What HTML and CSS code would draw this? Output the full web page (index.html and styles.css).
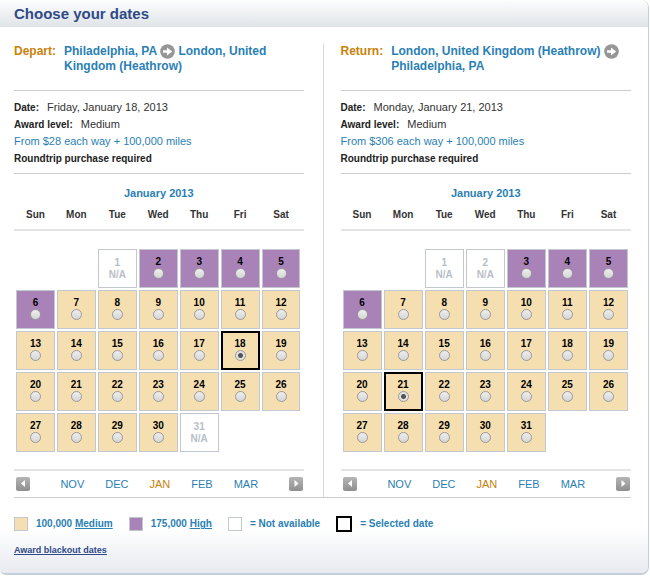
FILE: index.html
```html
<!DOCTYPE html>
<html lang="en">
<head>
<meta charset="utf-8">
<title>Choose your dates</title>
<link rel="stylesheet" href="styles.css">
</head>
<body>
<svg class="defs" aria-hidden="true">
  <symbol id="arrow" viewBox="0 0 15 15">
    <circle cx="7.5" cy="7.5" r="7.3" fill="#969696"/>
    <path d="M3 6.3h4V3.4l5.2 4.1L7 11.6V8.7H3z" fill="#fff"/>
  </symbol>
</svg>
<main class="panel">
  <h1 class="title">Choose your dates</h1>
  <div class="trips">
    <section class="trip">
      <h2 class="route"><span class="way">Depart:</span><span class="cities">Philadelphia, PA <svg class="arrow" aria-hidden="true"><use href="#arrow"/></svg> <span>London, United</span> <span class="keep">Kingdom (Heathrow)</span></span></h2>
      <div class="facts">
        <p><b>Date:</b><span class="value">Friday, January 18, 2013</span></p>
        <p><b>Award level:</b><span class="value">Medium</span></p>
        <p class="fare">From $28 each way + 100,000 miles</p>
        <p class="note">Roundtrip purchase required</p>
      </div>
      <table class="calendar">
        <caption>January 2013</caption>
        <thead><tr><th>Sun</th><th>Mon</th><th>Tue</th><th>Wed</th><th>Thu</th><th>Fri</th><th>Sat</th></tr></thead>
        <tbody>
          <tr>
            <td></td><td></td>
            <td class="day na">1<br>N/A</td>
            <td class="day high"><label>2<input type="radio" name="depart"></label></td>
            <td class="day high"><label>3<input type="radio" name="depart"></label></td>
            <td class="day high"><label>4<input type="radio" name="depart"></label></td>
            <td class="day high"><label>5<input type="radio" name="depart"></label></td>
          </tr>
          <tr>
            <td class="day high"><label>6<input type="radio" name="depart"></label></td>
            <td class="day"><label>7<input type="radio" name="depart"></label></td>
            <td class="day"><label>8<input type="radio" name="depart"></label></td>
            <td class="day"><label>9<input type="radio" name="depart"></label></td>
            <td class="day"><label>10<input type="radio" name="depart"></label></td>
            <td class="day"><label>11<input type="radio" name="depart"></label></td>
            <td class="day"><label>12<input type="radio" name="depart"></label></td>
          </tr>
          <tr>
            <td class="day"><label>13<input type="radio" name="depart"></label></td>
            <td class="day"><label>14<input type="radio" name="depart"></label></td>
            <td class="day"><label>15<input type="radio" name="depart"></label></td>
            <td class="day"><label>16<input type="radio" name="depart"></label></td>
            <td class="day"><label>17<input type="radio" name="depart"></label></td>
            <td class="day"><label>18<input type="radio" name="depart" checked></label></td>
            <td class="day"><label>19<input type="radio" name="depart"></label></td>
          </tr>
          <tr>
            <td class="day"><label>20<input type="radio" name="depart"></label></td>
            <td class="day"><label>21<input type="radio" name="depart"></label></td>
            <td class="day"><label>22<input type="radio" name="depart"></label></td>
            <td class="day"><label>23<input type="radio" name="depart"></label></td>
            <td class="day"><label>24<input type="radio" name="depart"></label></td>
            <td class="day"><label>25<input type="radio" name="depart"></label></td>
            <td class="day"><label>26<input type="radio" name="depart"></label></td>
          </tr>
          <tr>
            <td class="day"><label>27<input type="radio" name="depart"></label></td>
            <td class="day"><label>28<input type="radio" name="depart"></label></td>
            <td class="day"><label>29<input type="radio" name="depart"></label></td>
            <td class="day"><label>30<input type="radio" name="depart"></label></td>
            <td class="day na">31<br>N/A</td>
            <td></td><td></td>
          </tr>
        </tbody>
      </table>
      <nav class="months" aria-label="Departure month">
        <button class="step" aria-label="Earlier months"><svg viewBox="0 0 14 14"><path d="M9 3v7L5 6.500z" fill="#fff"/></svg></button>
        <div class="month-list"><a href="#">NOV</a><a href="#">DEC</a><a href="#" class="current">JAN</a><a href="#">FEB</a><a href="#">MAR</a></div>
        <button class="step" aria-label="Later months"><svg viewBox="0 0 14 14"><path d="M5.500 3v7l4-3.500z" fill="#fff"/></svg></button>
      </nav>
    </section>
    <section class="trip">
      <h2 class="route"><span class="way">Return:</span><span class="cities">London, United Kingdom (Heathrow) <svg class="arrow" aria-hidden="true"><use href="#arrow"/></svg> <span class="keep">Philadelphia, PA</span></span></h2>
      <div class="facts">
        <p><b>Date:</b><span class="value">Monday, January 21, 2013</span></p>
        <p><b>Award level:</b><span class="value">Medium</span></p>
        <p class="fare">From $306 each way + 100,000 miles</p>
        <p class="note">Roundtrip purchase required</p>
      </div>
      <table class="calendar">
        <caption>January 2013</caption>
        <thead><tr><th>Sun</th><th>Mon</th><th>Tue</th><th>Wed</th><th>Thu</th><th>Fri</th><th>Sat</th></tr></thead>
        <tbody>
          <tr>
            <td></td><td></td>
            <td class="day na">1<br>N/A</td>
            <td class="day na">2<br>N/A</td>
            <td class="day high"><label>3<input type="radio" name="return"></label></td>
            <td class="day high"><label>4<input type="radio" name="return"></label></td>
            <td class="day high"><label>5<input type="radio" name="return"></label></td>
          </tr>
          <tr>
            <td class="day high"><label>6<input type="radio" name="return"></label></td>
            <td class="day"><label>7<input type="radio" name="return"></label></td>
            <td class="day"><label>8<input type="radio" name="return"></label></td>
            <td class="day"><label>9<input type="radio" name="return"></label></td>
            <td class="day"><label>10<input type="radio" name="return"></label></td>
            <td class="day"><label>11<input type="radio" name="return"></label></td>
            <td class="day"><label>12<input type="radio" name="return"></label></td>
          </tr>
          <tr>
            <td class="day"><label>13<input type="radio" name="return"></label></td>
            <td class="day"><label>14<input type="radio" name="return"></label></td>
            <td class="day"><label>15<input type="radio" name="return"></label></td>
            <td class="day"><label>16<input type="radio" name="return"></label></td>
            <td class="day"><label>17<input type="radio" name="return"></label></td>
            <td class="day"><label>18<input type="radio" name="return"></label></td>
            <td class="day"><label>19<input type="radio" name="return"></label></td>
          </tr>
          <tr>
            <td class="day"><label>20<input type="radio" name="return"></label></td>
            <td class="day"><label>21<input type="radio" name="return" checked></label></td>
            <td class="day"><label>22<input type="radio" name="return"></label></td>
            <td class="day"><label>23<input type="radio" name="return"></label></td>
            <td class="day"><label>24<input type="radio" name="return"></label></td>
            <td class="day"><label>25<input type="radio" name="return"></label></td>
            <td class="day"><label>26<input type="radio" name="return"></label></td>
          </tr>
          <tr>
            <td class="day"><label>27<input type="radio" name="return"></label></td>
            <td class="day"><label>28<input type="radio" name="return"></label></td>
            <td class="day"><label>29<input type="radio" name="return"></label></td>
            <td class="day"><label>30<input type="radio" name="return"></label></td>
            <td class="day"><label>31<input type="radio" name="return"></label></td>
            <td></td><td></td>
          </tr>
        </tbody>
      </table>
      <nav class="months" aria-label="Return month">
        <button class="step" aria-label="Earlier months"><svg viewBox="0 0 14 14"><path d="M9 3v7L5 6.500z" fill="#fff"/></svg></button>
        <div class="month-list"><a href="#">NOV</a><a href="#">DEC</a><a href="#" class="current">JAN</a><a href="#">FEB</a><a href="#">MAR</a></div>
        <button class="step" aria-label="Later months"><svg viewBox="0 0 14 14"><path d="M5.500 3v7l4-3.500z" fill="#fff"/></svg></button>
      </nav>
    </section>
  </div>
  <footer class="foot">
    <ul class="legend">
      <li><span class="swatch medium"></span><span>100,000 <a href="#">Medium</a></span></li>
      <li><span class="swatch high"></span><span>175,000 <a href="#">High</a></span></li>
      <li><span class="swatch"></span><span>= Not available</span></li>
      <li><span class="swatch selected"></span><span>= Selected date</span></li>
    </ul>
    <a class="blackout" href="#">Award blackout dates</a>
  </footer>
</main>
</body>
</html>
```
FILE: styles.css
```css
* { box-sizing: border-box; }

body {
  margin: 0;
  background: #fff;
  color: #333;
  font: 11px/17px "Liberation Sans", Arial, sans-serif;
}

h1, h2, p, ul { margin: 0; padding: 0; }
a { color: inherit; text-decoration: none; }
.defs { display: none; }

.panel {
  margin-right: 1px;
  border: solid #c3cfd8;
  border-width: 0 1px 2px 0;
  border-radius: 0 8px 8px 6px;
  overflow: hidden;
}

.title {
  padding-left: 14px;
  background: linear-gradient(#fdfdfd, #dfe4e8);
  color: #2f4a87;
  font-size: 15px;
  line-height: 27px;
}

.trips {
  display: grid;
  grid-template-columns: 1fr 1fr;
  margin: 17px 17px 0 14px;
  border-bottom: 1px solid #ccc;
}

.trip { padding-right: 19px; }
.trip + .trip {
  padding: 0 0 0 17px;
  border-left: 1px solid #d5d8dc;
}

.route {
  display: flex;
  gap: 8px;
  height: 47px;
  border-bottom: 1px solid #ccc;
  color: #2a7fb5;
  font-size: 12px;
  line-height: 15px;
}
.way { color: #c9820a; }
.keep { white-space: nowrap; }
.arrow {
  width: 15px;
  height: 15px;
  vertical-align: top;
}

.facts {
  padding: 8px 0 6px;
  border-bottom: 1px solid #ccc;
}
.facts b, .note {
  color: #222;
  font-size: 10px;
  font-weight: bold;
}
.value { margin-left: 8px; }
.facts .fare { color: #2a7fb5; }

.calendar { display: block; }
.calendar caption {
  display: block;
  padding: 11px 0 4px;
  color: #2a7fb5;
  font-weight: bold;
}
.calendar thead {
  display: block;
  padding: 0 3px 6px 2px;
  border-bottom: 2px solid #e4e4e4;
  font-size: 10px;
}
.calendar tbody {
  display: grid;
  gap: 2px;
  padding: 18px 3px 17px 2px;
  font-size: 10px;
}
.calendar tr {
  display: grid;
  grid-template-columns: repeat(7, 1fr);
  gap: 2px;
}
.calendar th, .calendar td { padding: 0; text-align: center; }

.day {
  height: 39px;
  border: 1px solid #c3c8d0;
  background: #f5dfb0;
  color: #000;
  font-weight: bold;
}
.day label { display: block; padding-top: 5px; line-height: 13px; }
.day input {
  display: block;
  appearance: none;
  width: 11px;
  height: 11px;
  margin: 0 auto;
  border: 1px solid #999;
  border-radius: 50%;
  background: linear-gradient(#eee, #d6d6d6);
}
.day input:checked {
  background: radial-gradient(circle, #555 2px, #e2e2e2 3px);
}
.day:has(:checked) { border: 2px solid #000; }
.day:has(:checked) label { padding-top: 4px; }
.high { background: #a983b8; }
.day.na {
  padding-top: 7px;
  background: #fff;
  color: #b9bec6;
  line-height: 12px;
}

.months {
  display: flex;
  justify-content: space-between;
  align-items: center;
  height: 28px;
  padding: 0 1px 0 2px;
  border-top: 2px solid #e4e4e4;
  color: #2a7fb5;
}
.month-list { display: flex; gap: 21px; }
.months .current { color: #c9820a; }
.step {
  width: 14px;
  height: 14px;
  padding: 0;
  border: 0;
  border-radius: 2px;
  background: linear-gradient(#b5b5b5, #8f8f8f);
}
.step svg { display: block; }

.foot {
  padding: 17px 14px 14px;
  background: linear-gradient(#fff 40%, #e8eaf0);
}
.legend {
  display: flex;
  gap: 16px;
  list-style: none;
  color: #2a7fb5;
  font-size: 10px;
  font-weight: bold;
}
.legend li { display: flex; align-items: center; gap: 8px; }
.legend a { text-decoration: underline; }
.swatch {
  width: 14px;
  height: 14px;
  border: 1px solid #c3c8d0;
}
.medium { background: #f5dfb0; }
.selected { width: 16px; height: 16px; border: 2px solid #000; }
.blackout {
  display: inline-block;
  margin-top: 10px;
  color: #2f4a87;
  font-size: 9px;
  font-weight: bold;
  text-decoration: underline;
}
```
